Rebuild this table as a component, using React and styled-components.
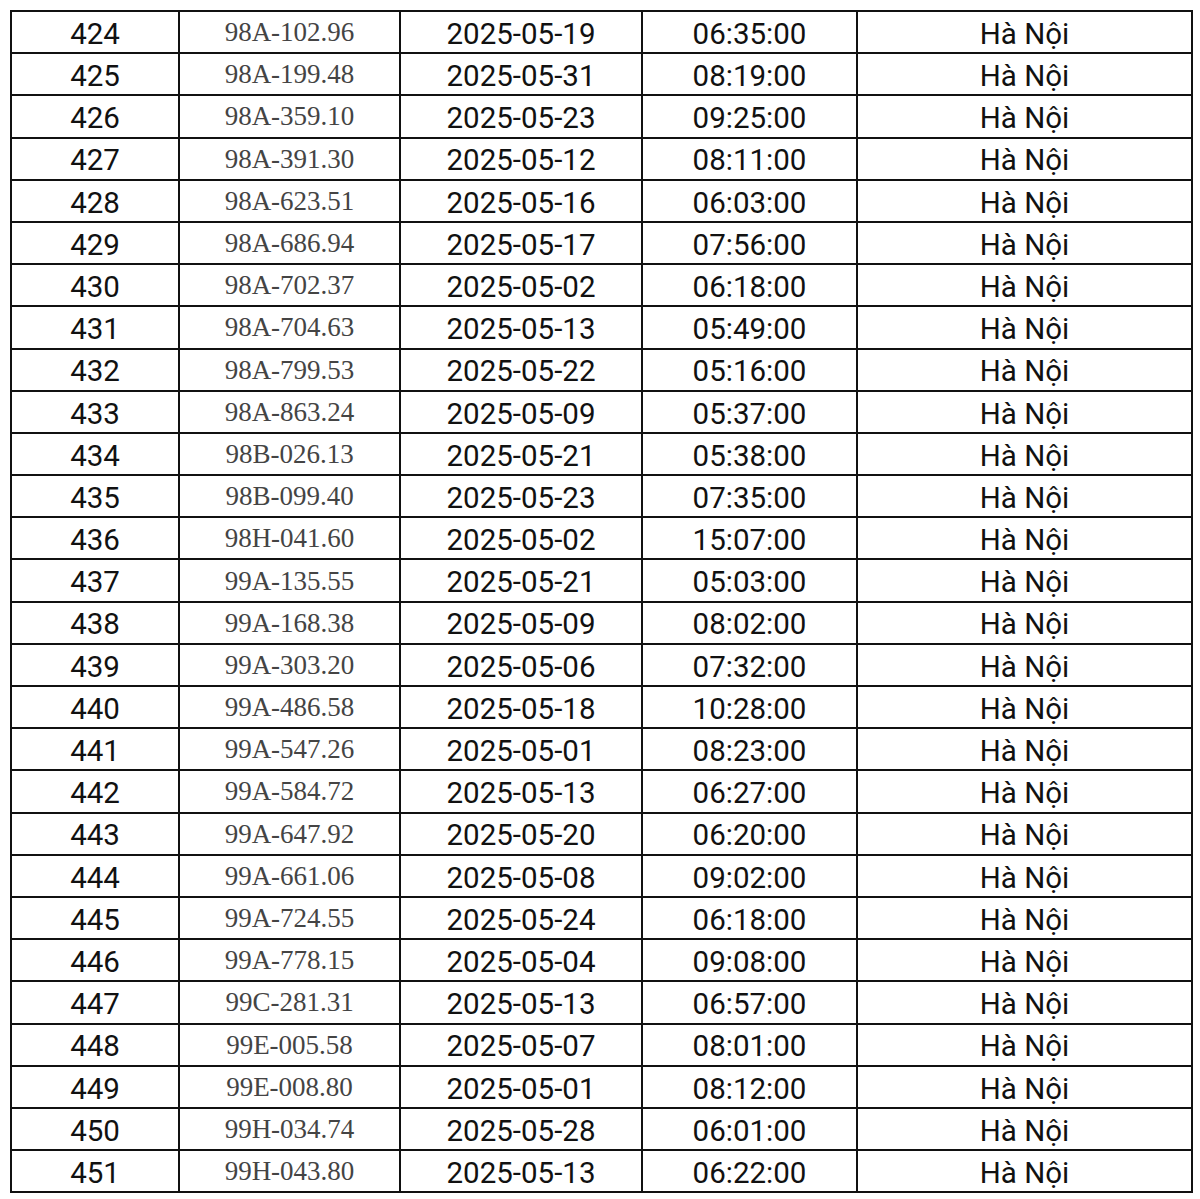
import styled, { createGlobalStyle } from 'styled-components';

const GlobalStyle = createGlobalStyle`
  html, body {
    margin: 0;
    padding: 0;
    background: #ffffff;
  }
`;

const Page = styled.div`
  padding: 10px 0 0 10px;
`;

const Table = styled.table`
  width: 1181px;
  table-layout: fixed;
  border-collapse: collapse;
  border: 2px solid #111;
`;

const Row = styled.tr`
  height: 42.2px;
`;

const Cell = styled.td`
  border: 2px solid #111;
  padding: ${(p) => (p.$serif ? '1px 0 0 0' : '5px 0 0 0')};
  text-align: center;
  vertical-align: middle;
  line-height: 1;
  white-space: nowrap;
  font-family: ${(p) => (p.$serif ? '"Liberation Serif", serif' : 'Roboto, "Liberation Sans", sans-serif')};
  font-size: ${(p) => (p.$serif ? '27px' : '29.5px')};
  color: ${(p) => (p.$serif ? '#444' : '#111')};
`;

const widths = [168, 221, 242, 215, 335];

const rows = [
  [424, '98A-102.96', '2025-05-19', '06:35:00'],
  [425, '98A-199.48', '2025-05-31', '08:19:00'],
  [426, '98A-359.10', '2025-05-23', '09:25:00'],
  [427, '98A-391.30', '2025-05-12', '08:11:00'],
  [428, '98A-623.51', '2025-05-16', '06:03:00'],
  [429, '98A-686.94', '2025-05-17', '07:56:00'],
  [430, '98A-702.37', '2025-05-02', '06:18:00'],
  [431, '98A-704.63', '2025-05-13', '05:49:00'],
  [432, '98A-799.53', '2025-05-22', '05:16:00'],
  [433, '98A-863.24', '2025-05-09', '05:37:00'],
  [434, '98B-026.13', '2025-05-21', '05:38:00'],
  [435, '98B-099.40', '2025-05-23', '07:35:00'],
  [436, '98H-041.60', '2025-05-02', '15:07:00'],
  [437, '99A-135.55', '2025-05-21', '05:03:00'],
  [438, '99A-168.38', '2025-05-09', '08:02:00'],
  [439, '99A-303.20', '2025-05-06', '07:32:00'],
  [440, '99A-486.58', '2025-05-18', '10:28:00'],
  [441, '99A-547.26', '2025-05-01', '08:23:00'],
  [442, '99A-584.72', '2025-05-13', '06:27:00'],
  [443, '99A-647.92', '2025-05-20', '06:20:00'],
  [444, '99A-661.06', '2025-05-08', '09:02:00'],
  [445, '99A-724.55', '2025-05-24', '06:18:00'],
  [446, '99A-778.15', '2025-05-04', '09:08:00'],
  [447, '99C-281.31', '2025-05-13', '06:57:00'],
  [448, '99E-005.58', '2025-05-07', '08:01:00'],
  [449, '99E-008.80', '2025-05-01', '08:12:00'],
  [450, '99H-034.74', '2025-05-28', '06:01:00'],
  [451, '99H-043.80', '2025-05-13', '06:22:00'],
];

export default function App() {
  return (
    <Page>
      <GlobalStyle />
      <Table>
        <colgroup>
          {widths.map((w, i) => (
            <col key={i} style={{ width: w }} />
          ))}
        </colgroup>
        <tbody>
          {rows.map(([no, plate, date, time]) => (
            <Row key={no}>
              <Cell>{no}</Cell>
              <Cell $serif>{plate}</Cell>
              <Cell>{date}</Cell>
              <Cell>{time}</Cell>
              <Cell>Hà Nội</Cell>
            </Row>
          ))}
        </tbody>
      </Table>
    </Page>
  );
}
